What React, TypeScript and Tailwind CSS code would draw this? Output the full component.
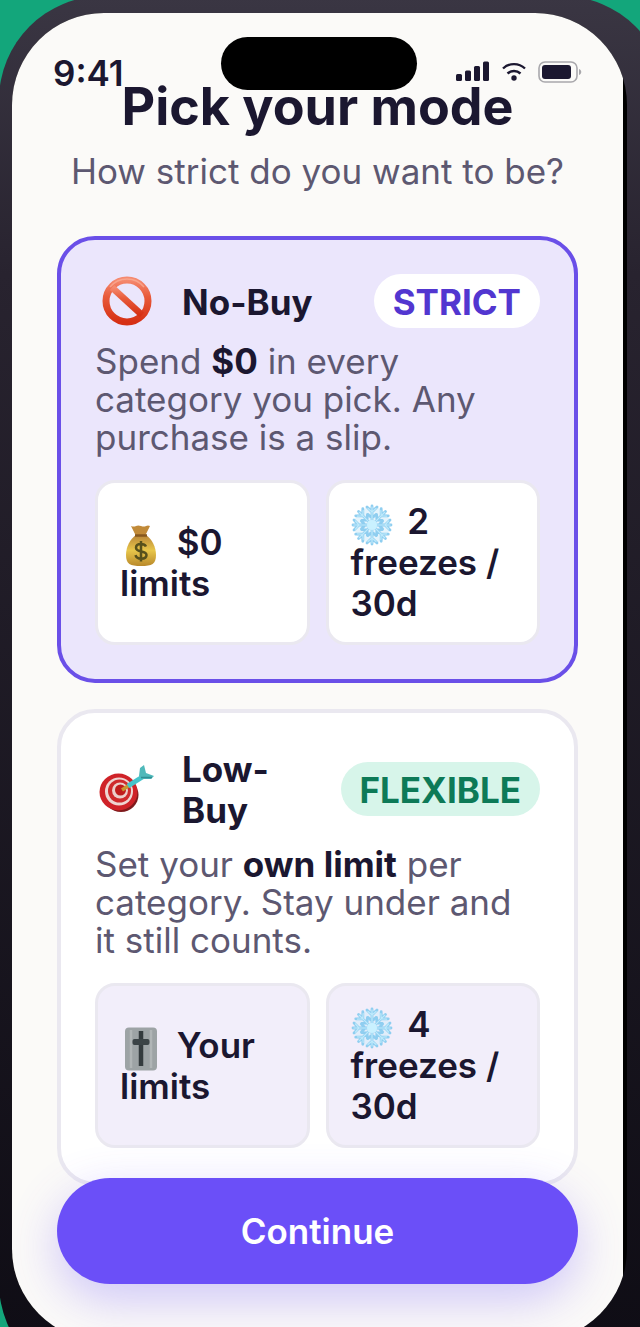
import React from 'react'

const BanIcon = () => (
  <svg viewBox="0 0 52 52" className="w-[52px] h-[52px]" aria-hidden="true">
    <defs>
      <linearGradient id="ban" x1="0" y1="0" x2="0" y2="1">
        <stop offset="0" stopColor="#f58a70" />
        <stop offset="0.4" stopColor="#e85a3a" />
        <stop offset="1" stopColor="#d63014" />
      </linearGradient>
    </defs>
    <g fill="none" stroke="url(#ban)">
      <circle cx="26" cy="26" r="21" strokeWidth="7" />
      <path d="M11 12.5 41 40" strokeWidth="6.5" />
    </g>
    <path d="M9 12a22 22 0 0 1 34 0" fill="none" stroke="#fbb09a" strokeWidth="1.5" opacity="0.7" />
  </svg>
)

const TargetIcon = () => (
  <svg viewBox="0 0 56 50" className="w-14 h-[50px]" aria-hidden="true">
    <ellipse cx="22" cy="31" rx="17.5" ry="17" fill="#7e1a1c" />
    <ellipse cx="19.5" cy="28" rx="19" ry="18.5" fill="#cf2228" />
    <ellipse cx="20" cy="27.5" rx="14" ry="14" fill="#eed5d2" />
    <ellipse cx="20.5" cy="27" rx="11.5" ry="11.5" fill="#cf2a2c" />
    <ellipse cx="21" cy="26.5" rx="8" ry="8" fill="#eccfcb" />
    <ellipse cx="21.5" cy="26" rx="5.5" ry="5.5" fill="#c01c1c" />
    <path d="M23 26 32 20" stroke="#c7962f" strokeWidth="3.5" />
    <path d="M29 22 45 12" stroke="#45c4cb" strokeWidth="5" />
    <path d="M40 12 41 4 45 1 47 9 55 12 52 15 43 15Z" fill="#4fb9ba" />
    <path d="M42 13.5 53 13.5" stroke="#2f8f94" strokeWidth="1.5" />
  </svg>
)

const MoneyIcon = () => (
  <svg viewBox="0 0 42 42" className="inline-block w-[42px] h-[42px] -my-2 mr-1.5 align-[-4px]" aria-hidden="true">
    <defs>
      <linearGradient id="bag" x1="0" y1="0" x2="0" y2="1">
        <stop offset="0" stopColor="#b98538" />
        <stop offset="0.5" stopColor="#e8c64a" />
        <stop offset="1" stopColor="#b9892b" />
      </linearGradient>
    </defs>
    <path d="M11 1q3 1 5 0t5 0 5 0 4 0l-4.500 9h-10Z" fill="#c18a38" />
    <path d="M16 10h10c6 4 10 12 10 20 0 9-4 11-15 11S6 39 6 30c0-8 4-16 10-20Z" fill="url(#bag)" />
    <path d="M15 10.500h12" stroke="#86571e" strokeWidth="2.5" />
    <path d="M26 21.500c-1-2-3-2.500-5-2.500-3 0-5 1.500-5 3.700 0 5.300 10.500 2.300 10.500 7.300 0 2.500-2.500 3.700-5.300 3.700-2.700 0-5-1-5.700-3.500M21 16v20.500" fill="none" stroke="#57501c" strokeWidth="2.5" />
  </svg>
)

const SnowIcon = () => (
  <svg viewBox="0 0 42 42" className="inline-block w-[42px] h-[42px] -my-2 mr-1.5 align-[-4px]" aria-hidden="true">
    <circle cx="21" cy="21" r="18" fill="#d3edfa" opacity="0.6" />
    <g fill="none" strokeLinecap="round">
      {[0, 45, 90, 135, 180, 225, 270, 315].map((angle) => (
        <g key={angle} transform={`rotate(${angle} 21 21)`}>
          <path d="M21 18V2M16 3 21 8l5-5M17 10.500l4 3.500 4-3.500" stroke="#8fcef0" strokeWidth="2.8" />
          <path d="M21 18V3M17 4.500 21 8l4-3.500" stroke="#bfeafb" strokeWidth="1.2" />
        </g>
      ))}
    </g>
    <circle cx="21" cy="21" r="5" fill="#c9f1ff" />
  </svg>
)

const SliderIcon = () => (
  <svg viewBox="0 0 42 44" className="inline-block w-[42px] h-[44px] -my-2 mr-1.5 align-[-5px]" aria-hidden="true">
    <rect x="5" y="0.5" width="32" height="43" rx="4" fill="#9da3a5" />
    <path d="M11 3v38M31 3v38" stroke="#b0b5b6" strokeWidth="2.5" />
    <path d="M21 4v35" stroke="#343b3e" strokeWidth="4.5" />
    <rect x="12.5" y="12" width="17" height="6" rx="2" fill="#3b4346" />
  </svg>
)

const StatusBar = () => (
  <div className="absolute inset-x-0 top-0 pt-6 pl-[41px] pr-[43px] grid grid-cols-[1fr_196px_1fr] text-[#1b1730]">
    <span className="pt-4 text-[35px] leading-10 font-semibold">9:41</span>
    <div className="h-[53px] rounded-full bg-black" />
    <div className="flex items-start justify-end gap-3 pt-6 pr-0.5">
      <svg viewBox="0 0 34 20" className="w-[34px] h-5" fill="currentColor" aria-hidden="true">
        <rect x="0" y="13" width="6" height="7" rx="1.5" />
        <rect x="9" y="9.5" width="6" height="10.5" rx="1.5" />
        <rect x="18" y="5" width="6" height="15" rx="1.5" />
        <rect x="27" y="0.5" width="6" height="19.5" rx="1.5" />
      </svg>
      <svg viewBox="0 0 24 20" className="w-6 h-5" fill="none" stroke="currentColor" strokeWidth="2.4" aria-hidden="true">
        <path d="M1 7.500a16 16 0 0 1 22 0M5.500 12.500a9.500 9.500 0 0 1 13 0" />
        <circle cx="12" cy="17" r="2.7" fill="currentColor" stroke="none" />
      </svg>
      <svg viewBox="0 0 44 22" className="w-11 h-[22px]" aria-hidden="true">
        <rect x="1" y="1" width="38" height="20" rx="6" fill="none" stroke="#a9a8ac" strokeWidth="1.6" />
        <rect x="4" y="4" width="29" height="14" rx="3" fill="currentColor" />
        <path d="M41 8c3 1 3 5 0 6Z" fill="#a9a8ac" />
      </svg>
    </div>
  </div>
)

type ChipProps = { icon: React.ReactNode; text: string; selected?: boolean }

const Chip = ({ icon, text, selected }: ChipProps) => (
  <div
    className={`flex-1 flex items-center rounded-[20px] border-3 border-[#eae8f0] px-[22px] py-[18px] text-[35px] leading-[41px] font-semibold ${
      selected ? 'bg-white' : 'bg-[#f2eefa]'
    }`}
  >
    <p>
      {icon} {text}
    </p>
  </div>
)

type CardProps = {
  icon: React.ReactNode
  title: string
  badge: string
  selected?: boolean
  children: React.ReactNode
  chips: React.ReactNode
}

const ModeCard = ({ icon, title, badge, selected, children, chips }: CardProps) => (
  <section
    className={`rounded-[38px] border-4 p-[34px] ${
      selected ? 'border-[#6a4fe8] bg-[#ebe6fc]' : 'border-[#eae8f0] bg-white'
    }`}
  >
    <div className="flex items-center">
      <div className="w-16 mr-[23px] flex justify-center shrink-0">{icon}</div>
      <h2 className="flex-1 pt-0.5 text-[35px] leading-[41px] font-bold">{title}</h2>
      <span
        className={`ml-4 rounded-full px-[19px] pt-2 pb-[5px] text-[35px] leading-[41px] font-bold ${
          selected ? 'bg-white text-[#5236d0]' : 'bg-[#d7f5ea] text-[#0d7a57]'
        }`}
      >
        {badge}
      </span>
    </div>
    <p className="mt-3.5 pr-2 text-[35px] leading-[38px] text-[#5d5871]">{children}</p>
    <div className="mt-6 flex gap-4">{chips}</div>
  </section>
)

const App = () => {
  return (
    <div className="h-screen overflow-hidden bg-[#13a67b] font-[Inter,sans-serif] [font-optical-sizing:none] text-[#1b1730]">
      <div className="-mt-1 -ml-px -mr-[26px] rounded-[104px] bg-linear-to-b from-[#3a3643] via-[#28232f] via-20% to-[#0e0c14] pt-[17px] pl-[13px] pr-[39px] pb-[46px]">
        <div className="relative overflow-hidden rounded-[92px] bg-black pr-1">
          <main className="bg-[#fbfaf8] px-[45px] pt-[62px] pb-[57px]">
            <h1 className="text-center text-[52px] leading-[64px] font-bold">Pick your mode</h1>
            <p className="mt-3 text-center text-[35px] leading-10 text-[#5d5871]">How strict do you want to be?</p>
            <div className="mt-[45px] flex flex-col gap-[26px]">
              <ModeCard
                icon={<BanIcon />}
                title="No-Buy"
                badge="STRICT"
                selected
                chips={
                  <>
                    <Chip icon={<MoneyIcon />} text="$0 limits" selected />
                    <Chip icon={<SnowIcon />} text="2 freezes / 30d" selected />
                  </>
                }
              >
                Spend <strong className="text-[#1b1730]">$0</strong> in every category you pick. Any purchase is a slip.
              </ModeCard>
              <ModeCard
                icon={<TargetIcon />}
                title="Low-Buy"
                badge="FLEXIBLE"
                chips={
                  <>
                    <Chip icon={<SliderIcon />} text="Your limits" />
                    <Chip icon={<SnowIcon />} text="4 freezes / 30d" />
                  </>
                }
              >
                Set your <strong className="text-[#1b1730]">own limit</strong> per category. Stay under and it still counts.
              </ModeCard>
            </div>
            <button className="relative -mt-2 block w-full rounded-full bg-[#6b4ff8] py-8 text-[35px] leading-[42px] font-semibold text-white shadow-[0_16px_48px_rgba(107,79,248,0.3)]">
              Continue
            </button>
          </main>
          <StatusBar />
        </div>
      </div>
    </div>
  )
}

export default App
